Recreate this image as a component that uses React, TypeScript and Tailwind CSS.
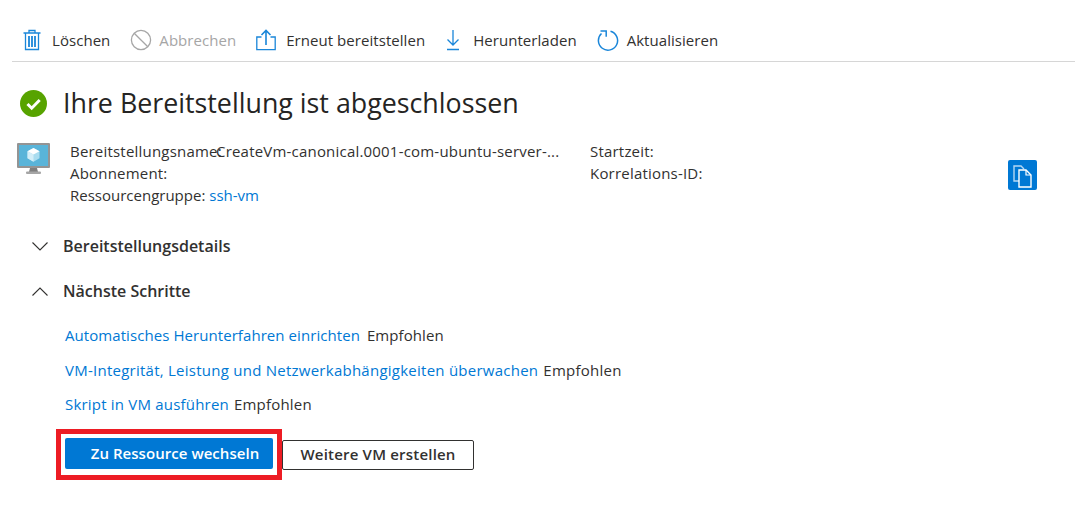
import React from 'react';

const Trash = () => (
  <svg width="18" height="22" viewBox="0 0 18 22" fill="none" stroke="#1a86d9" strokeWidth="1.3">
    <path d="M.5 4h17M6 4V1.5h6V4M2.5 4v16.5h13V4" />
    <path d="M6 7v11M9 7v11M12 7v11" strokeWidth="1.8" />
  </svg>
);

const Cancel = () => (
  <svg width="22" height="22" viewBox="0 0 22 22" fill="none" stroke="#a6a6a6" strokeWidth="1.3">
    <circle cx="11" cy="11" r="9.6" />
    <path d="M4.2 4.2l13.6 13.6" />
  </svg>
);

const Redeploy = () => (
  <svg width="20" height="22" viewBox="0 0 20 22" fill="none" stroke="#1a86d9" strokeWidth="1.3">
    <path d="M5.5 8H.8v12.6h18.4V8h-4.7" />
    <path d="M10 16V1.5M5.5 6L10 1.5 14.5 6" strokeWidth="1.6" />
  </svg>
);

const Download = () => (
  <svg width="16" height="22" viewBox="0 0 16 22" fill="none" stroke="#1a86d9" strokeWidth="1.3">
    <path d="M8 1v15M2.5 10.5L8 16l5.5-5.5M2 20.5h12" />
  </svg>
);

const Refresh = () => (
  <svg width="22" height="23" viewBox="0 0 22 23" fill="none" stroke="#1a86d9" strokeWidth="1.5">
    <path d="M13.5 2.3a9.6 9.6 0 1 1-9 2.2" />
    <path d="M3.5 2H9.2V7.8" />
  </svg>
);

const Success = () => (
  <svg width="27" height="27" viewBox="0 0 27 27">
    <circle cx="13.5" cy="13.5" r="13.5" fill="#57a300" />
    <path d="M7.5 14l4.2 4.2 8-8.2" fill="none" stroke="#fff" strokeWidth="3" />
  </svg>
);

const Vm = () => (
  <svg width="34" height="32" viewBox="0 0 34 32">
    <rect x="0" y="0" width="33" height="25" rx="1" fill="#949494" />
    <rect x="2" y="2" width="29" height="21" fill="#59b4d9" />
    <path d="M16.5 5l6 3.2v7l-6 3.6-6-3.6v-7z" fill="#a9dcef" />
    <path d="M16.5 5l6 3.2-6 3.4-6-3.4z" fill="#fff" />
    <path d="M16.5 11.6v7.2l-6-3.6v-7z" fill="#d3eef8" />
    <path d="M13 25h7l1 4h-9z" fill="#7f7f7f" />
    <rect x="9" y="28.5" width="15" height="2.5" rx="1" fill="#a6a6a6" />
  </svg>
);

const Copy = () => (
  <svg width="29" height="30" viewBox="0 0 29 30">
    <rect width="29" height="30" rx="2" fill="#0078d4" />
    <path d="M11 21H6V6h7l3 3" fill="none" stroke="#b5d8f3" strokeWidth="1.4" />
    <path d="M11 10h7l5 5v12H11z" fill="#0078d4" stroke="#fff" strokeWidth="1.4" />
    <path d="M18 10v5h5" fill="none" stroke="#fff" strokeWidth="1.2" />
  </svg>
);

const Chevron = ({ up }: { up?: boolean }) => (
  <svg width="16" height="9" viewBox="0 0 16 9" fill="none" stroke="#323130" strokeWidth="1.1" className="shrink-0">
    <path d={up ? 'M.5 8.5L8 1l7.5 7.5' : 'M.5.5L8 8 15.5.5'} />
  </svg>
);

function ToolItem({ icon, label, disabled, iconClass }: { icon: React.ReactNode; label: string; disabled?: boolean; iconClass: string }) {
  return (
    <div className={`flex items-center ${disabled ? 'text-[#a6a6a6]' : 'text-[#323130]'}`}>
      <span className={`flex justify-start ${iconClass}`}>{icon}</span>
      <span>{label}</span>
    </div>
  );
}

export default function App() {
  return (
    <div className="w-[1075px] h-[505px] bg-white overflow-hidden text-[15px] text-[#323130] font-['Open_Sans',sans-serif] tracking-[0.2px]">
      <div className="ml-3 h-[62px] pt-[29px] pl-[11px] border-b border-[#d6d6d6] tracking-[0.05px]">
        <div className="h-[22px] flex items-center gap-[20px]">
          <ToolItem icon={<Trash />} label="Löschen" iconClass="w-[29px]" />
          <ToolItem icon={<Cancel />} label="Abbrechen" disabled iconClass="w-[29px]" />
          <ToolItem icon={<Redeploy />} label="Erneut bereitstellen" iconClass="w-[30px]" />
          <ToolItem icon={<Download />} label="Herunterladen" iconClass="w-[28px]" />
          <ToolItem icon={<Refresh />} label="Aktualisieren" iconClass="w-[30px]" />
        </div>
      </div>

      <div className="flex items-center pl-5 mt-[23px] h-9 tracking-normal">
        <Success />
        <h1 className="ml-4 text-[26.8px] text-[#252423] font-normal">Ihre Bereitstellung ist abgeschlossen</h1>
      </div>

      <div className="flex mt-[19px] pl-[17px]">
        <div className="w-[53px] pt-[3px]"><Vm /></div>
        <div className="w-[520px] leading-[22px]">
          <div className="whitespace-nowrap"><span className="inline-block w-[146px]">Bereitstellungsname:</span>CreateVm-canonical.0001-com-ubuntu-server-...</div>
          <div>Abonnement:</div>
          <div className="tracking-normal">Ressourcengruppe: <span className="text-[#0078d4]">ssh-vm</span></div>
        </div>
        <div className="leading-[22px]">
          <div>Startzeit:</div>
          <div>Korrelations-ID:</div>
        </div>
        <div className="ml-auto mr-[38px] mt-[20px]"><Copy /></div>
      </div>

      <div className="mt-[28px] pl-[32px] h-6 flex items-center font-semibold text-[16px] tracking-normal">
        <Chevron />
        <span className="ml-[15px]">Bereitstellungsdetails</span>
      </div>
      <div className="mt-[21px] pl-[32px] h-6 flex items-center font-semibold text-[16px] tracking-normal">
        <Chevron up />
        <span className="ml-[15px]">Nächste Schritte</span>
      </div>

      <div className="pl-[65px] mt-[21px] flex flex-col gap-[12.5px] leading-[22px]">
        <div className="tracking-[0.07px]"><span className="text-[#0078d4]">Automatisches Herunterfahren einrichten</span><span className="ml-[7px]">Empfohlen</span></div>
        <div className="tracking-[0.25px]"><span className="text-[#0078d4]">VM-Integrität, Leistung und Netzwerkabhängigkeiten überwachen</span><span className="ml-[5px]">Empfohlen</span></div>
        <div><span className="text-[#0078d4]">Skript in VM ausführen</span><span className="ml-[5px]">Empfohlen</span></div>
      </div>

      <div className="ml-[56px] mt-[14px] flex items-center">
        <div className="border-[5px] border-[#ed1c24] p-1 w-[226px] h-[51px]">
          <button className="w-[208px] h-[31px] bg-[#0078d4] text-white rounded-[2px] font-semibold pl-[12px] tracking-[0.05px]">Zu Ressource wechseln</button>
        </div>
        <button className="w-[192px] h-[30px] bg-white border border-[#323130] rounded-[2px] font-semibold tracking-[0.2px]">Weitere VM erstellen</button>
      </div>
    </div>
  );
}
